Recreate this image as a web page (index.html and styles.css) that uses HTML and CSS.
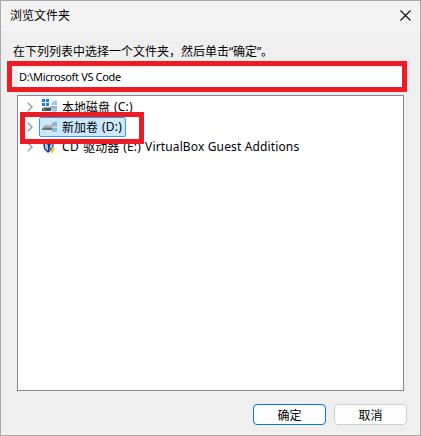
FILE: index.html
```html
<!DOCTYPE html>
<html lang="zh-CN">
<head>
<meta charset="utf-8">
<title>浏览文件夹</title>
<link rel="stylesheet" href="styles.css">
</head>
<body>
<main class="dialog">
  <header class="titlebar">
    <span>浏览文件夹</span>
    <svg class="close" width="11" height="11" viewBox="0 0 11 11"><path d="M.5 .5 10.5 10.5M10.5 .5 .5 10.5"/></svg>
  </header>
  <p class="hint">在下列列表中选择一个文件夹，然后单击<span class="quote">“</span>确定<span class="quote">”</span>。</p>
  <div class="path-mark"><div class="path"><span>D:\Microsoft VS Code</span></div></div>
  <div class="tree">
    <div class="row">
      <svg class="chevron" width="6" height="10" viewBox="0 0 6 10"><path d="M.8 .8 5 5 .8 9.2"/></svg>
      <div class="item">
        <svg class="icon" width="16" height="16" viewBox="0 0 16 16">
          <path fill="#1685d8" d="M0 0h3v3H0zM4 0h3v3H4zM0 4h3v3H0zM4 4h3v3H4z"/>
          <path fill="#a9b0b4" d="M8 7h7v2H8zM2 8h8v1H2z"/><path fill="#9cc9df" d="M9 6q0-3 4-4V1l2 1v4zM9 9h6v3l-2 1q-3 0-4-3z"/><path fill="#4d5356" d="M0 9h9v3H0z"/><path fill="#35d66b" d="M1 10h2v1H1z"/>
        </svg>
        <span class="label"><span>本地磁盘</span><span class="latin drive">(C:)</span></span>
      </div>
    </div>
    <div class="row">
      <svg class="chevron" width="6" height="10" viewBox="0 0 6 10"><path d="M.8 .8 5 5 .8 9.2"/></svg>
      <div class="item selected">
        <svg class="icon" width="16" height="16" viewBox="0 0 16 16">
          <path fill="#b2b6b8" d="M3 6h12v2H1z"/><path fill="#83b9d2" d="M9 6q0-2 4-3V2l2 1v3zM9 9h6v3l-2 1q-3 0-4-3z"/><path fill="#6c7073" d="M0 9h10v2H0z"/><path fill="#929698" d="M1 8h9v1H1z"/><path fill="#35d66b" d="M1 9h1v1H1z"/>
        </svg>
        <span class="label"><span>新加卷</span><span class="latin drive">(D:)</span></span>
      </div>
    </div>
    <div class="row">
      <svg class="chevron" width="6" height="10" viewBox="0 0 6 10"><path d="M.8 .8 5 5 .8 9.2"/></svg>
      <div class="item">
        <svg class="icon" width="16" height="16" viewBox="0 0 16 16">
          <path fill="#163f79" d="m1 3 5-2 6 2-1 7-5 4-4-4z"/><path fill="#a9c8e5" d="m3 4 3 2v6l-3-3zM8 6l3-2-1 4-2 3z"/><path fill="#fff" d="m4 3 2-1 3 1-3 1z"/>
          <path fill="#f5c73c" d="M8 10q2-3 5-1l-1 3-2 2q-3-1-2-4z"/><path fill="#2878c8" d="M7 9h3v2H7z"/>
        </svg>
        <span class="label"><span class="latin cd">CD</span><span>驱动器</span><span class="latin drive">(E:)</span><span class="latin volume">VirtualBox Guest Additions</span></span>
      </div>
    </div>
    <div class="drive-mark"></div>
  </div>
  <footer class="actions">
    <button class="primary">确定</button>
    <button>取消</button>
  </footer>
</main>
</body>
</html>
```
FILE: styles.css
```css
* { box-sizing: border-box; }
body {
  margin: 0;
  background: #efefef;
  color: #000;
  font: 12px/16px "Noto Sans CJK SC", "Noto Sans", sans-serif;
}
.dialog {
  width: 421px;
  height: 436px;
  overflow: hidden;
  background: #efefef;
  border: 1px solid #aaa;
  display: flex;
  flex-direction: column;
}
.titlebar {
  height: 30px;
  flex: none;
  padding: 0 9px 2px;
  background: #f3f3f3;
  display: flex;
  align-items: center;
  justify-content: space-between;
}
.close { fill: none; stroke: #111; stroke-width: 1.2; }
.hint {
  margin: 10px 0 0 12px;
  height: 20px;
  line-height: 19px;
  white-space: nowrap;
}
.quote { display: inline-block; width: 4px; font-family: "Noto Sans", sans-serif; }
.path-mark {
  width: 400px;
  height: 31px;
  flex: none;
  margin-left: 6px;
  border: 5px solid #ed1c24;
  padding: 2px 0 0 6px;
}
.path {
  height: 19px;
  background: #fff;
  padding-left: 1px;
  line-height: 17px;
  font-family: "Noto Sans", sans-serif;
  font-size: 11px;
  white-space: nowrap;
}
.path span { letter-spacing: -.35px; }
.tree {
  position: relative;
  width: 387px;
  height: 296px;
  flex: none;
  margin: 3px 0 0 16px;
  padding-top: 1px;
  background: #fff;
  border: 1px solid #828790;
}
.row { height: 20px; display: flex; align-items: center; padding-left: 9px; }
.chevron { fill: none; stroke: #999; stroke-width: 1.4; margin-right: 6px; }
.item {
  height: 20px;
  display: flex;
  align-items: center;
  padding: 0 3px 0 2px;
  border: 1px solid transparent;
}
.selected { width: 87px; background: #cce8ff; border-color: #3b9be2; border-radius: 2px; }
.icon { flex: none; margin-right: 4px; }
.label { display: flex; gap: 4px; white-space: nowrap; line-height: 18px; }
.latin { font-family: "Noto Sans", sans-serif; font-size: 12px; }
.cd { letter-spacing: .4px; }
.drive { letter-spacing: .2px; }
.volume { letter-spacing: .14px; }
.drive-mark {
  position: absolute;
  left: 2px;
  top: 16px;
  width: 124px;
  height: 32px;
  border: 5px solid #ed1c24;
}
.actions { display: flex; gap: 8px; margin: 13px 0 0 252px; }
button {
  width: 73px;
  height: 21px;
  padding: 0;
  border: 1px solid #d0d0d0;
  border-radius: 4px;
  background: #fdfdfd;
  color: #000;
  font: inherit;
  line-height: 19px;
}
.primary { border-color: #0078d4; }
```
